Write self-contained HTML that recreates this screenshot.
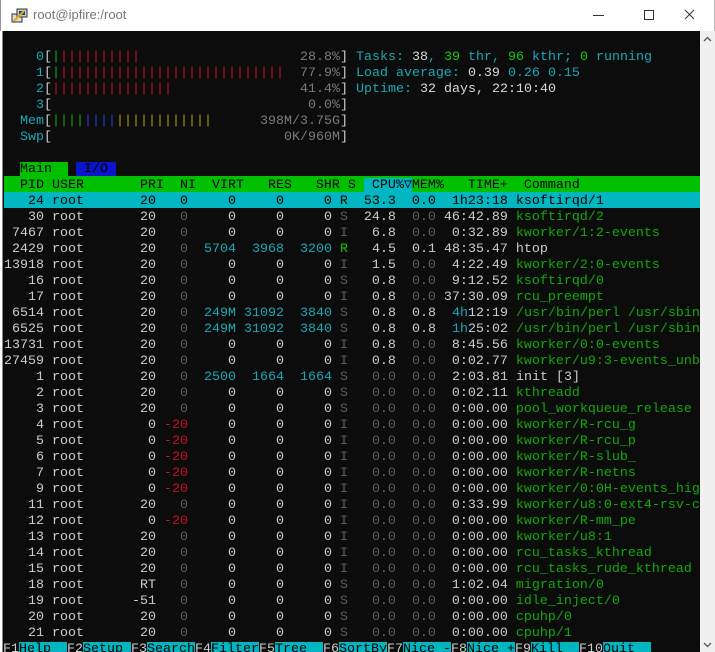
<!DOCTYPE html>
<html><head><meta charset="utf-8"><style>
*{margin:0;padding:0;box-sizing:border-box}
body{width:715px;height:652px;overflow:hidden;background:#fff;font-family:"Liberation Mono",monospace;position:relative}
#title{position:absolute;left:0;top:0;width:715px;height:31px;background:#fff;border-left:1px solid #999;border-right:1px solid #bbb}
#title .t{position:absolute;left:32px;top:7px;font:13px "Liberation Sans",sans-serif;color:#777}
#term{position:absolute;left:2px;top:31px;width:698px;height:621px;background:#0c0c0c;overflow:hidden;border-left:1px solid #888}
#sb{position:absolute;left:700px;top:31px;width:15px;height:621px;background:#f0f0f0}
.l{position:absolute;left:1px;height:16px;padding-top:3px;width:697px;white-space:pre;font-size:13.33px;line-height:13px;color:#cccccc;overflow:hidden}
.d{color:#5c5c5c}.c{color:#1aa8b8}.n{color:#13a80e}.r{color:#c50f1f}.w{color:#d8d8d8}.b{color:#1f3fd0}.y{color:#a89c00}.m{color:#7a7a7a}
.gs{color:#16c60c}
.hdr{background:#00c000;color:#000}
.sel{background:#00b6c0;color:#000}
.tri{display:inline-block;width:8px;overflow:hidden;vertical-align:top}
</style></head><body>
<div id="title">
<svg style="position:absolute;left:10px;top:8px" width="18" height="16" viewBox="0 0 18 16"><rect x="1" y="6" width="10" height="8" fill="#ddd" stroke="#333"/><rect x="6" y="1" width="10" height="8" fill="#ccc" stroke="#333"/><rect x="8" y="3" width="6" height="4" fill="#1040a0"/><path d="M3 13 L13 3" stroke="#e0b000" stroke-width="2"/></svg>
<span class="t">root@ipfire:/root</span>
<svg style="position:absolute;left:590px;top:8px" width="115" height="16" viewBox="0 0 115 16"><path d="M2 7.5h11" stroke="#333" stroke-width="1"/><rect x="53.5" y="2.5" width="9" height="9" fill="none" stroke="#333"/><path d="M94 2l9 9M103 2l-9 9" stroke="#333"/></svg>
</div>
<div id="term">
<div class="l" style="top:17px"><span class="c">    0</span>[<span class="n">|</span><span class="r">||||||||||</span>                    <span class="m">28.8%</span>] <span class="c">Tasks: </span><span class="w">38</span><span class="c">, </span><span class="gs">39</span><span class="c"> thr, </span><span class="gs">96</span><span class="c"> kthr; </span><span class="gs">0</span><span class="c"> running</span></div>
<div class="l" style="top:33px"><span class="c">    1</span>[<span class="n">|</span><span class="r">||||||||||||||||||||||||||||</span>  <span class="m">77.9%</span>] <span class="c">Load average: </span><span class="w">0.39 </span><span class="c">0.26 </span><span class="c">0.15</span></div>
<div class="l" style="top:49px"><span class="c">    2</span>[<span class="r">|||||||||||||||</span>                <span class="m">41.4%</span>] <span class="c">Uptime: </span><span class="w">32 days, 22:10:40</span></div>
<div class="l" style="top:65px"><span class="c">    3</span>[                                <span class="m">0.0%</span>]</div>
<div class="l" style="top:81px"><span class="c">  Mem</span>[<span class="n">||||</span><span class="b">||||</span><span class="y">||||||||||||</span>      <span class="m">398M/3.75G</span>]</div>
<div class="l" style="top:97px"><span class="c">  Swp</span>[                             <span class="m">0K/960M</span>]</div>
<div class="l" style="top:129px">  <span style="background:#00c000;color:#000">Main  </span> <span style="background:#0a14c8;color:#000"> I/O </span></div>
<div class="l hdr" style="top:145px">  PID USER       PRI  NI  VIRT   RES   SHR S <span style="background:#00b6c0"> CPU%<span class="tri">▽</span></span>MEM%   TIME+  Command</div>
<div class="l sel" style="top:161px">   24 root       20   0     0     0     0 R  53.3  0.0  1h23:18 ksoftirqd/1</div>
<div class="l" style="top:177px">   30 root       20   <span class="d">0</span>     0     0     0 <span class="d">S</span>  24.8  <span class="d">0.0</span> 46:42.89 <span class="n">ksoftirqd/2</span></div>
<div class="l" style="top:193px"> 7467 root       20   <span class="d">0</span>     0     0     0 <span class="d">I</span>   6.8  <span class="d">0.0</span>  0:32.89 <span class="n">kworker/1:2-events</span></div>
<div class="l" style="top:209px"> 2429 root       20   <span class="d">0</span>  <span class="c">5704</span>  <span class="c">3968</span>  <span class="c">3200</span> <span class="gs">R</span>   4.5  0.1 48:35.47 htop</div>
<div class="l" style="top:225px">13918 root       20   <span class="d">0</span>     0     0     0 <span class="d">I</span>   1.5  <span class="d">0.0</span>  4:22.49 <span class="n">kworker/2:0-events</span></div>
<div class="l" style="top:241px">   16 root       20   <span class="d">0</span>     0     0     0 <span class="d">S</span>   0.8  <span class="d">0.0</span>  9:12.52 <span class="n">ksoftirqd/0</span></div>
<div class="l" style="top:257px">   17 root       20   <span class="d">0</span>     0     0     0 <span class="d">I</span>   0.8  <span class="d">0.0</span> 37:30.09 <span class="n">rcu_preempt</span></div>
<div class="l" style="top:273px"> 6514 root       20   <span class="d">0</span>  <span class="c">249M</span> <span class="c">31092</span>  <span class="c">3840</span> <span class="d">S</span>   0.8  0.8  <span class="c">4h</span>12:19 <span class="n">/usr/bin/perl /usr/sbin/</span></div>
<div class="l" style="top:289px"> 6525 root       20   <span class="d">0</span>  <span class="c">249M</span> <span class="c">31092</span>  <span class="c">3840</span> <span class="d">S</span>   0.8  0.8  <span class="c">1h</span>25:02 <span class="n">/usr/bin/perl /usr/sbin/</span></div>
<div class="l" style="top:305px">13731 root       20   <span class="d">0</span>     0     0     0 <span class="d">I</span>   0.8  <span class="d">0.0</span>  8:45.56 <span class="n">kworker/0:0-events</span></div>
<div class="l" style="top:321px">27459 root       20   <span class="d">0</span>     0     0     0 <span class="d">I</span>   0.8  <span class="d">0.0</span>  0:02.77 <span class="n">kworker/u9:3-events_unbound</span></div>
<div class="l" style="top:337px">    1 root       20   <span class="d">0</span>  <span class="c">2500</span>  <span class="c">1664</span>  <span class="c">1664</span> <span class="d">S</span>   <span class="d">0.0</span>  <span class="d">0.0</span>  2:03.81 init [3]</div>
<div class="l" style="top:353px">    2 root       20   <span class="d">0</span>     0     0     0 <span class="d">S</span>   <span class="d">0.0</span>  <span class="d">0.0</span>  0:02.11 <span class="n">kthreadd</span></div>
<div class="l" style="top:369px">    3 root       20   <span class="d">0</span>     0     0     0 <span class="d">S</span>   <span class="d">0.0</span>  <span class="d">0.0</span>  0:00.00 <span class="n">pool_workqueue_release</span></div>
<div class="l" style="top:385px">    4 root        0 <span class="r">-20</span>     0     0     0 <span class="d">I</span>   <span class="d">0.0</span>  <span class="d">0.0</span>  0:00.00 <span class="n">kworker/R-rcu_g</span></div>
<div class="l" style="top:401px">    5 root        0 <span class="r">-20</span>     0     0     0 <span class="d">I</span>   <span class="d">0.0</span>  <span class="d">0.0</span>  0:00.00 <span class="n">kworker/R-rcu_p</span></div>
<div class="l" style="top:417px">    6 root        0 <span class="r">-20</span>     0     0     0 <span class="d">I</span>   <span class="d">0.0</span>  <span class="d">0.0</span>  0:00.00 <span class="n">kworker/R-slub_</span></div>
<div class="l" style="top:433px">    7 root        0 <span class="r">-20</span>     0     0     0 <span class="d">I</span>   <span class="d">0.0</span>  <span class="d">0.0</span>  0:00.00 <span class="n">kworker/R-netns</span></div>
<div class="l" style="top:449px">    9 root        0 <span class="r">-20</span>     0     0     0 <span class="d">I</span>   <span class="d">0.0</span>  <span class="d">0.0</span>  0:00.00 <span class="n">kworker/0:0H-events_highpri</span></div>
<div class="l" style="top:465px">   11 root       20   <span class="d">0</span>     0     0     0 <span class="d">I</span>   <span class="d">0.0</span>  <span class="d">0.0</span>  0:33.99 <span class="n">kworker/u8:0-ext4-rsv-conversion</span></div>
<div class="l" style="top:481px">   12 root        0 <span class="r">-20</span>     0     0     0 <span class="d">I</span>   <span class="d">0.0</span>  <span class="d">0.0</span>  0:00.00 <span class="n">kworker/R-mm_pe</span></div>
<div class="l" style="top:497px">   13 root       20   <span class="d">0</span>     0     0     0 <span class="d">I</span>   <span class="d">0.0</span>  <span class="d">0.0</span>  0:00.00 <span class="n">kworker/u8:1</span></div>
<div class="l" style="top:513px">   14 root       20   <span class="d">0</span>     0     0     0 <span class="d">I</span>   <span class="d">0.0</span>  <span class="d">0.0</span>  0:00.00 <span class="n">rcu_tasks_kthread</span></div>
<div class="l" style="top:529px">   15 root       20   <span class="d">0</span>     0     0     0 <span class="d">I</span>   <span class="d">0.0</span>  <span class="d">0.0</span>  0:00.00 <span class="n">rcu_tasks_rude_kthread</span></div>
<div class="l" style="top:545px">   18 root       RT   <span class="d">0</span>     0     0     0 <span class="d">S</span>   <span class="d">0.0</span>  <span class="d">0.0</span>  1:02.04 <span class="n">migration/0</span></div>
<div class="l" style="top:561px">   19 root      -51   <span class="d">0</span>     0     0     0 <span class="d">S</span>   <span class="d">0.0</span>  <span class="d">0.0</span>  0:00.00 <span class="n">idle_inject/0</span></div>
<div class="l" style="top:577px">   20 root       20   <span class="d">0</span>     0     0     0 <span class="d">S</span>   <span class="d">0.0</span>  <span class="d">0.0</span>  0:00.00 <span class="n">cpuhp/0</span></div>
<div class="l" style="top:593px">   21 root       20   <span class="d">0</span>     0     0     0 <span class="d">S</span>   <span class="d">0.0</span>  <span class="d">0.0</span>  0:00.00 <span class="n">cpuhp/1</span></div>
<div class="l" style="top:609px;left:0;width:698px">F1<span class="sel">Help  </span>F2<span class="sel">Setup </span>F3<span class="sel">Search</span>F4<span class="sel">Filter</span>F5<span class="sel">Tree  </span>F6<span class="sel">SortBy</span>F7<span class="sel">Nice -</span>F8<span class="sel">Nice +</span>F9<span class="sel">Kill  </span>F10<span class="sel">Quit  </span></div>
</div>
<div id="sb">
<svg style="position:absolute;left:3px;top:5px" width="9" height="6" viewBox="0 0 9 6"><path d="M1 5L4.5 1.5L8 5" fill="none" stroke="#555" stroke-width="1.3"/></svg>
<svg style="position:absolute;left:3px;top:611px" width="9" height="6" viewBox="0 0 9 6"><path d="M1 1L4.5 4.5L8 1" fill="none" stroke="#555" stroke-width="1.3"/></svg>
</div>
</body></html>
